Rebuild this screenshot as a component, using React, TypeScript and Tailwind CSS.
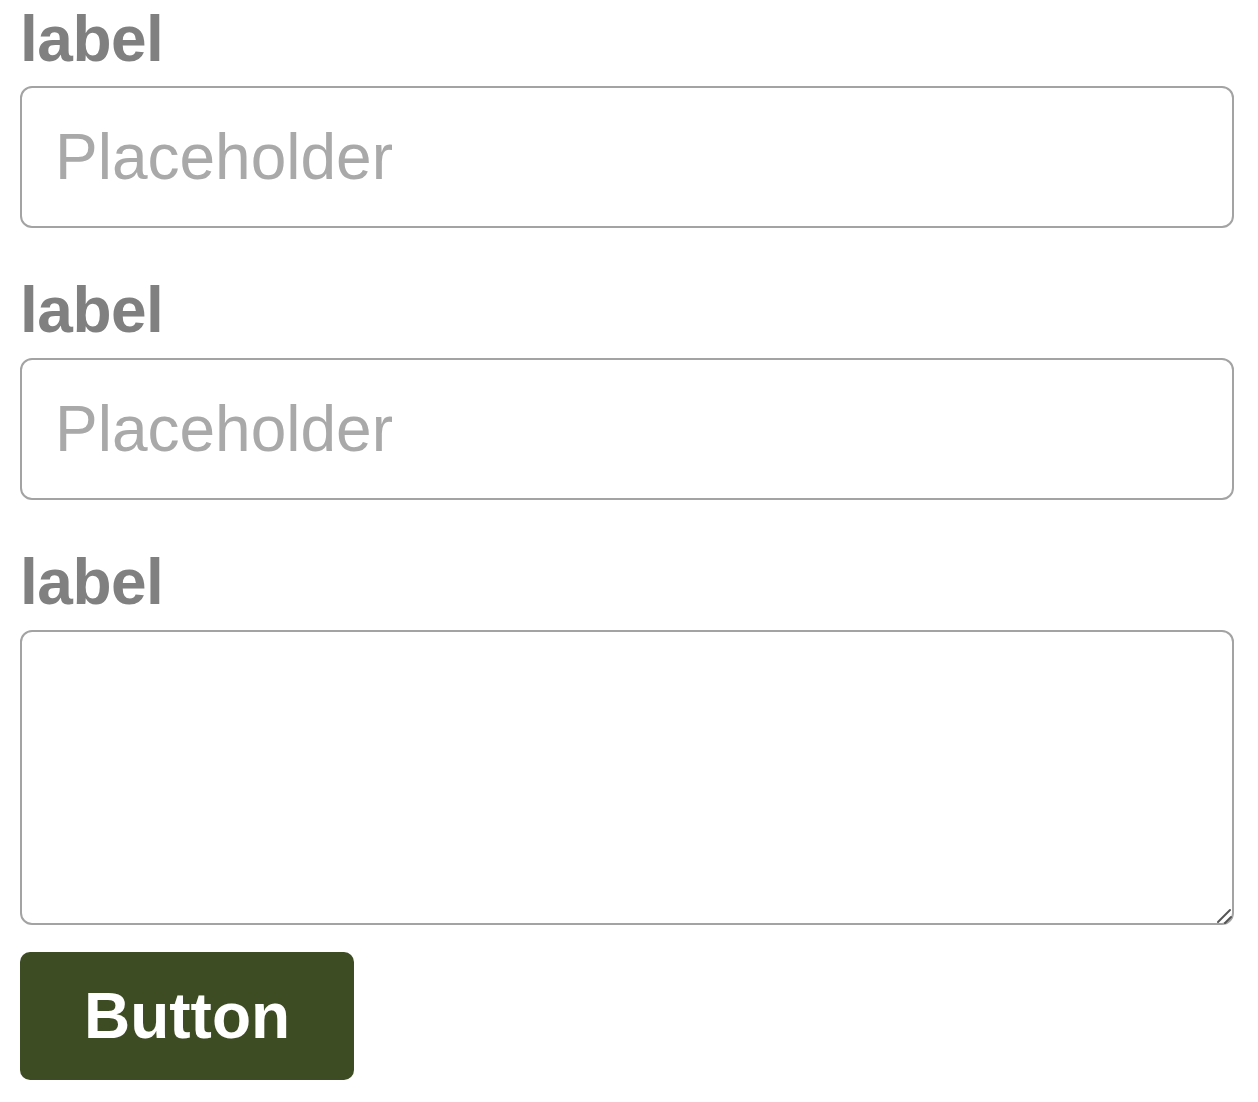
import React from 'react';

const fieldBase =
  "w-[1214px] border-2 border-[#a3a3a3] rounded-[12px] bg-white text-[64px] text-[#333] placeholder:text-[#a9a9a9] outline-none";

const Label = ({ children }: { children: React.ReactNode }) => (
  <label className="block text-[64px] leading-[64px] font-bold text-[#808080] tracking-[-0.5px]">
    {children}
  </label>
);

const App = () => {
  return (
    <div
      className="min-h-screen bg-white pl-[20px] pt-[7px]"
      style={{ fontFamily: '"Liberation Sans", Arial, sans-serif' }}
    >
      <form className="flex flex-col" onSubmit={(e) => e.preventDefault()}>
        <Label>label</Label>
        <input
          type="text"
          placeholder="Placeholder"
          className={`${fieldBase} h-[142px] mt-[15px] pl-[33px]`}
        />

        <div className="mt-[50px]">
          <Label>label</Label>
        </div>
        <input
          type="text"
          placeholder="Placeholder"
          className={`${fieldBase} h-[142px] mt-[16px] pl-[33px]`}
        />

        <div className="mt-[50px]">
          <Label>label</Label>
        </div>
        <div className="relative mt-[16px] w-[1214px]">
          <textarea className={`${fieldBase} block h-[295px] p-[30px] resize-none`} />
          {/* resize grip */}
          <svg
            className="absolute right-[2px] bottom-[1px] pointer-events-none"
            width="16"
            height="16"
            viewBox="0 0 16 16"
          >
            <line x1="2" y1="14" x2="14" y2="2" stroke="#555" strokeWidth="2" strokeLinecap="round" />
            <line x1="9" y1="15" x2="15" y2="9" stroke="#555" strokeWidth="2" strokeLinecap="round" />
          </svg>
        </div>

        <button
          type="submit"
          className="mt-[27px] w-[334px] h-[128px] rounded-[10px] bg-[#3e4c23] text-white text-[64px] font-bold leading-none"
        >
          Button
        </button>
      </form>
    </div>
  );
};

export default App;
